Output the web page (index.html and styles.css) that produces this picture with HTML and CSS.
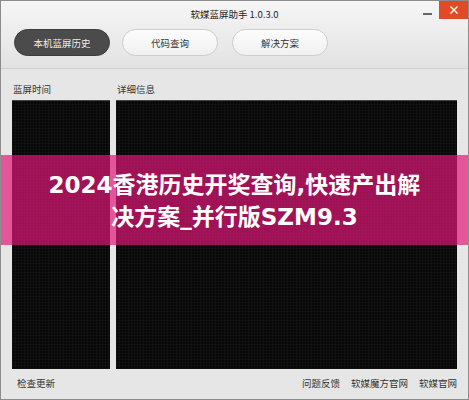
FILE: index.html
```html
<!DOCTYPE html>
<html lang="zh-CN">
<head>
    <meta charset="UTF-8">
    <title>软媒蓝屏助手</title>
    <link rel="stylesheet" href="styles.css">
</head>
<body>
<div class="window">
    <div class="header">
        <div class="titlebar">
            <span></span>
            <span class="title">软媒蓝屏助手 1.0.3.0</span>
            <div class="controls">
                <span class="min"></span>
                <span class="close">
                    <svg width="10" height="10" viewBox="0 0 10 10"><path d="M1.5 1.5L8.5 8.5M8.5 1.5L1.5 8.5" stroke="#fff" stroke-width="1.4" fill="none"/></svg>
                </span>
            </div>
        </div>
        <div class="tabs">
            <div class="tab active">本机蓝屏历史</div>
            <div class="tab">代码查询</div>
            <div class="tab tab-last">解决方案</div>
        </div>
    </div>

    <div class="main">
        <div class="col">
            <div class="label">蓝屏时间</div>
            <div class="panel"></div>
        </div>
        <div class="col">
            <div class="label">详细信息</div>
            <div class="panel"></div>
        </div>
    </div>

    <div class="footer">
        <span>检查更新</span>
        <div class="links">
            <span>问题反馈</span>
            <span>软媒魔方官网</span>
            <span>软媒官网</span>
        </div>
    </div>

    <div class="banner">
        <div class="banner-text">2024香港历史开奖查询,快速产出解<br>决方案_并行版SZM9.3</div>
    </div>
</div>
</body>
</html>
```

FILE: styles.css
```css
body { margin: 0; background: #fff; font-family: "Noto Sans CJK SC", "Noto Sans", sans-serif; }
.window { position: relative; width: 469px; height: 400px; box-sizing: border-box; border: 1px solid #8c8c8c; background: #e6e6e6; display: flex; flex-direction: column; overflow: hidden; }

.header { height: 67px; background: linear-gradient(#f6f6f6, #e2e2e2); border-bottom: 1px solid #d0d0d0; }
.titlebar { height: 28px; display: grid; grid-template-columns: 1fr auto 1fr; }
.title { font-size: 9.5px; color: #222; line-height: 26px; }
.controls { display: flex; justify-content: flex-end; align-items: flex-start; }
.min { width: 9px; height: 2px; background: #666; margin: 12px 7px 0 0; }
.close { width: 29px; height: 18px; background: #e04a26; display: flex; align-items: center; justify-content: center; }

.tabs { display: flex; gap: 12px; padding-left: 13px; }
.tab { width: 96px; height: 27px; box-sizing: border-box; border-radius: 14px; border: 1px solid #cdcdcd; background: linear-gradient(#fdfdfd, #f0f0f0); font-size: 9.5px; color: #333; display: flex; align-items: center; justify-content: center; }
.tab.active { background: #4b4b4b; border-color: #3c3c3c; color: #eee; }
.tab-last { margin-left: 2px; }

.main { display: flex; gap: 6px; padding: 12px 11px 0 11px; }
.col { display: flex; flex-direction: column; }
.col:first-child { width: 98px; }
.col:last-child { width: 341px; }
.label { font-size: 9.5px; color: #333; line-height: 16px; height: 19px; padding-left: 1px; }
.panel { height: 269px; background-color: #070707; background-image: repeating-linear-gradient(90deg, #111 0 1px, transparent 1px 3px), repeating-linear-gradient(0deg, #101010 0 1px, transparent 1px 3px); border-top: 1px solid #444; box-sizing: border-box; }

.footer { flex: 1; display: flex; justify-content: space-between; align-items: center; padding: 0 11px 2px 16px; font-size: 9.5px; color: #333; }
.links { display: flex; gap: 11px; }

.banner { position: absolute; left: -1px; right: -1px; top: 154px; height: 90px; background: rgba(226, 22, 119, 0.69); display: flex; align-items: center; justify-content: center; }
.banner-text { color: #fff; font-family: "DejaVu Sans", "Noto Sans CJK SC", sans-serif; font-weight: bold; font-size: 23px; line-height: 32px; text-align: center; padding-top: 1px; }
```
